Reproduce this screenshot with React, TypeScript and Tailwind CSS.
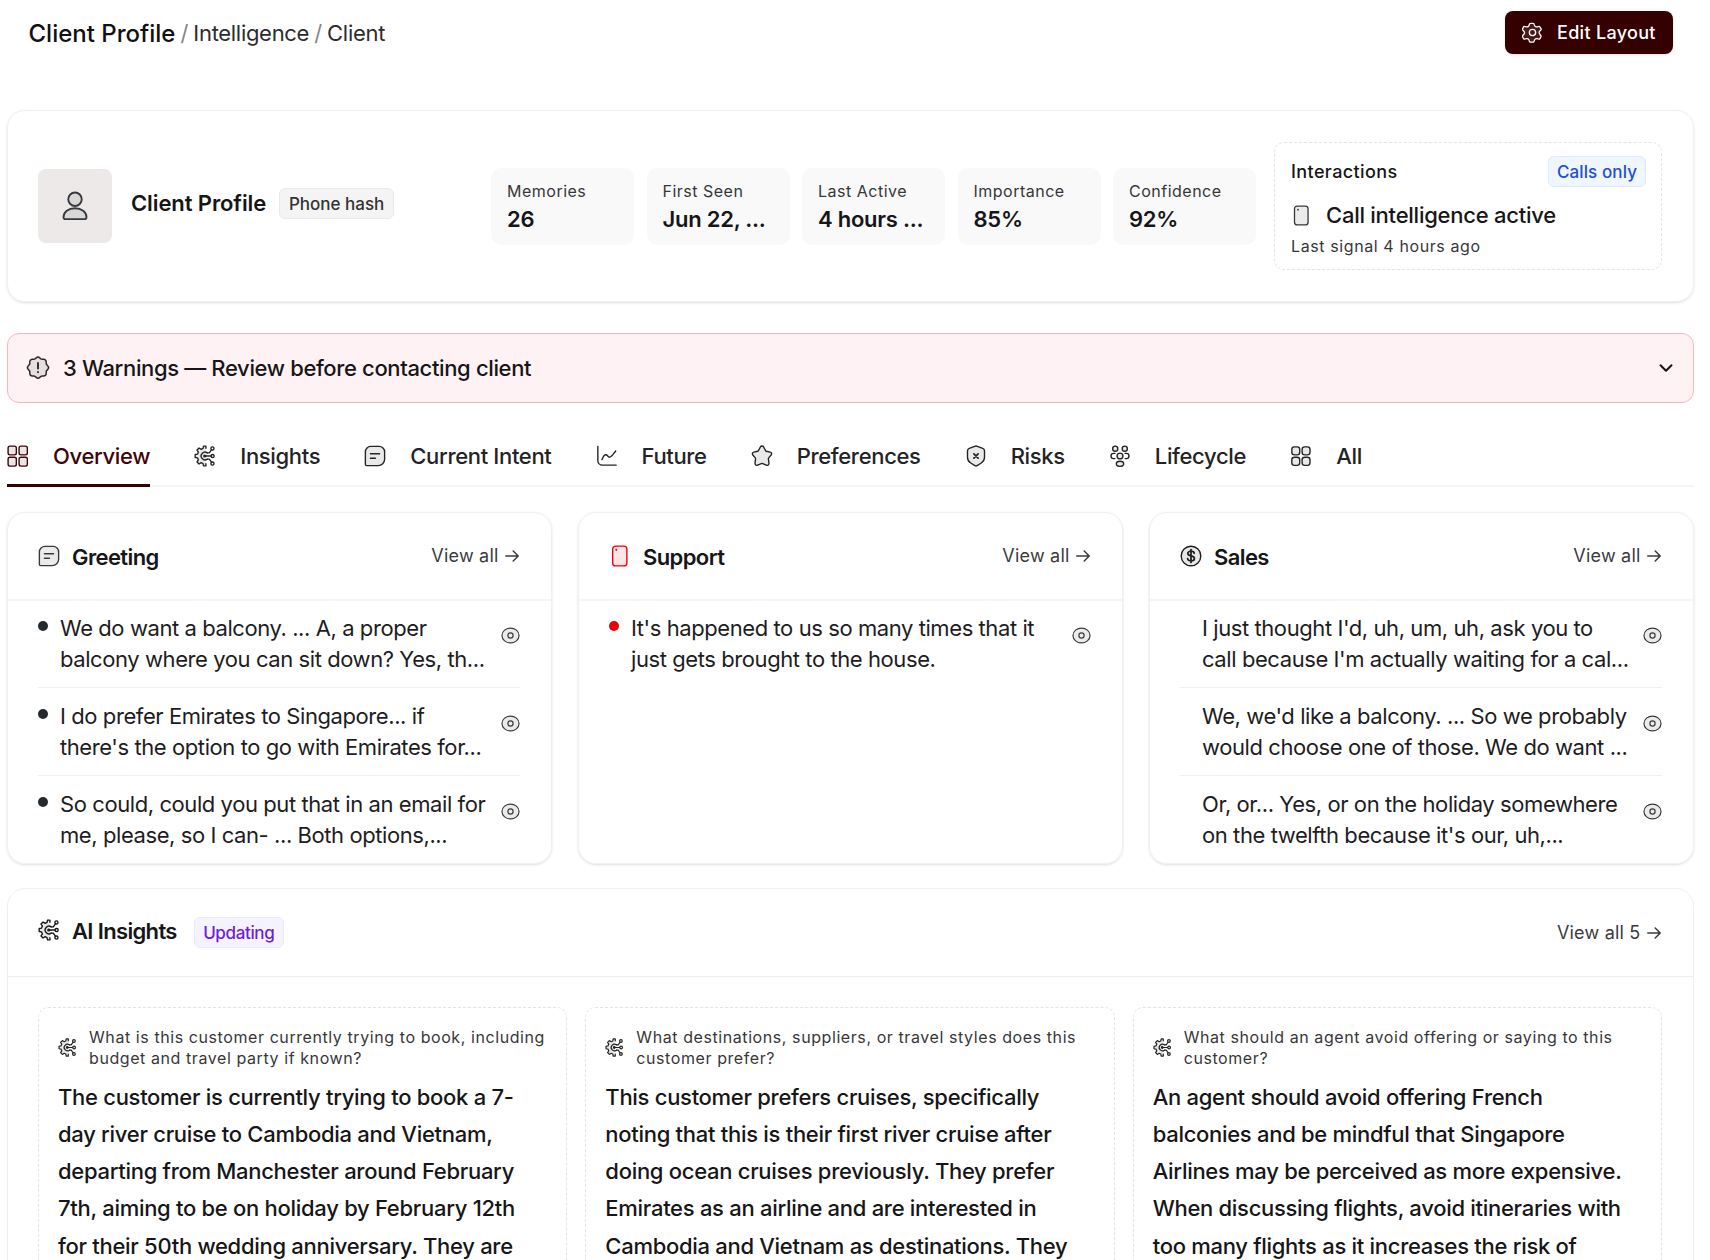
import type { ReactNode } from "react";
import { ChevronDown } from "lucide-react";

type IconProps = { className?: string };

function Svg({ className, children }: { className?: string; children: ReactNode }) {
  return (
    <svg
      viewBox="0 0 24 24"
      fill="none"
      stroke="currentColor"
      strokeWidth={1.5}
      strokeLinecap="round"
      strokeLinejoin="round"
      className={className}
    >
      {children}
    </svg>
  );
}

const tint = { fill: "currentColor", fillOpacity: 0.1 };

const GridIcon = ({ className }: IconProps) => (
  <Svg className={className}>
    <rect x="1.2" y="1.2" width="9" height="9.6" rx="2" {...tint} />
    <rect x="13.2" y="1.2" width="9" height="9.6" rx="2" {...tint} />
    <rect x="1.2" y="13.4" width="9" height="9.6" rx="2" {...tint} />
    <rect x="13.2" y="13.4" width="9" height="9.6" rx="2" {...tint} />
  </Svg>
);

const AllIcon = ({ className }: IconProps) => (
  <Svg className={className}>
    <rect x="2" y="2" width="8.6" height="8.8" rx="2.8" {...tint} />
    <rect x="13.2" y="2" width="8.6" height="8.8" rx="2.8" {...tint} />
    <rect x="2" y="13.4" width="8.6" height="8.8" rx="2.8" {...tint} />
    <rect x="13.2" y="13.4" width="8.6" height="8.8" rx="2.8" {...tint} />
  </Svg>
);

const BrainIcon = ({ className }: IconProps) => (
  <Svg className={className}>
    <path
      d="M13 3.6V1.2h-2.6l-.6 2.6-2 .9L5.5 3.3 3.3 5.500l1.500 2.200-.9 2.200-2.600.5v3.200l2.600.5.9 2.200-1.500 2.200 2.200 2.200 2.300-1.400 2 .9.6 2.600H13v-2.400"
      {...tint}
    />
    <path d="M14.500 8.600a4.200 4.200 0 1 0 0 6.800" />
    <path d="M12 12h6.500M14.500 8.600h2.200l2.300-3.200M14.500 15.400h2.200l2.300 3.200" />
    <circle cx="11.700" cy="12" r="1" />
    <circle cx="20.300" cy="12" r="1.700" />
    <circle cx="20.100" cy="3.800" r="1.700" />
    <circle cx="20.100" cy="20.200" r="1.700" />
  </Svg>
);

const NoteIcon = ({ className }: IconProps) => (
  <Svg className={className}>
    <path d="M1.500 7.500a6 6 0 0 1 6-6h9a6 6 0 0 1 6 6v8a7 7 0 0 1-7 7H3a1.500 1.500 0 0 1-1.500-1.500z" {...tint} />
    <path d="M7 9.500h10M7 14.500h5.500" />
  </Svg>
);

const ChartIcon = ({ className }: IconProps) => (
  <Svg className={className}>
    <path d="M2 1.500v15.500a5 5 0 0 0 5 5h15" />
    <path d="M6.500 16c1.200-3 2.500-5.300 4.200-5.300 2 0 2.200 2.600 4 2.600 2.300 0 4.300-3.800 6.800-6.800" />
  </Svg>
);

const StarIcon = ({ className }: IconProps) => (
  <Svg className={className}>
    <path
      d="M10.200 2.200c.8-1.400 2.800-1.400 3.600 0l2.100 3.900c.2.400.6.600 1 .700l4 .9c1.500.3 2.100 2 1.100 3.200l-2.700 3.200c-.3.300-.4.700-.3 1.100l.6 4.700c.2 1.600-1.400 2.800-2.900 2.100l-3.900-1.800a1.900 1.900 0 0 0-1.600 0L7.300 22c-1.500.700-3.100-.5-2.900-2.100l.6-4.700c0-.4-.1-.8-.3-1.100L2 10.900C1 9.700 1.600 8 3.100 7.700l4-.9c.4-.1.800-.3 1-.7z"
      {...tint}
    />
  </Svg>
);

const ShieldIcon = ({ className }: IconProps) => (
  <Svg className={className}>
    <path
      d="M10.600 1.400a4 4 0 0 1 2.800 0l6 2.300a3 3 0 0 1 1.900 2.800v6.800c0 2.600-1.400 4.900-3.600 6.300l-4 2.600a3 3 0 0 1-3.400 0l-4-2.600a7.500 7.500 0 0 1-3.600-6.300V6.500a3 3 0 0 1 1.900-2.800z"
      {...tint}
    />
    <path d="m9.700 9.700 4.600 4.600M14.300 9.700l-4.600 4.600" strokeWidth={1.900} />
  </Svg>
);

const LifecycleIcon = ({ className }: IconProps) => (
  <Svg className={className}>
    <circle cx="6.800" cy="4" r="2.800" {...tint} />
    <circle cx="17.200" cy="4" r="2.800" {...tint} />
    <circle cx="12" cy="12" r="3.200" {...tint} />
    <ellipse cx="12" cy="20.500" rx="4" ry="2.800" {...tint} />
    <path d="M6.500 9.200H5a2.800 2.800 0 0 0 0 5.600h1.500M17.500 9.200H19a2.800 2.800 0 0 1 0 5.600h-1.500" />
  </Svg>
);

const PhoneIcon = ({ className }: IconProps) => (
  <Svg className={className}>
    <rect x="4" y="1.200" width="15.500" height="21.600" rx="3.200" {...tint} />
    <path d="M8 5.200v.2" strokeWidth={2} />
  </Svg>
);

const DollarIcon = ({ className }: IconProps) => (
  <Svg className={className}>
    <circle cx="12" cy="12" r="10.700" {...tint} />
    <path
      d="M15.500 9c-.3-1.400-1.700-2.200-3.500-2.200-2 0-3.500 1-3.500 2.500 0 3.700 7.200 1.500 7.200 5.300 0 1.600-1.600 2.600-3.700 2.600-2 0-3.400-.9-3.700-2.400M12 5v14"
      strokeWidth={1.900}
    />
  </Svg>
);

const WarnIcon = ({ className }: IconProps) => (
  <Svg className={className}>
    <path
      d="M10.200 1.900a2.600 2.600 0 0 1 3.600 0l.9.800c.4.400 1 .6 1.600.6h1.300a2.600 2.600 0 0 1 2.600 2.600v1.300c0 .6.2 1.200.6 1.600l.9 1a2.600 2.600 0 0 1 0 3.600l-.9 1c-.4.400-.6 1-.6 1.600v1.300a2.600 2.600 0 0 1-2.600 2.600h-1.300c-.6 0-1.200.2-1.600.6l-.9.900a2.600 2.600 0 0 1-3.600 0l-.9-.9c-.4-.4-1-.6-1.600-.6H6.400a2.600 2.600 0 0 1-2.600-2.600V16c0-.6-.2-1.200-.6-1.600l-.9-1a2.600 2.600 0 0 1 0-3.600l.9-1c.4-.4.6-1 .6-1.600V5.900a2.600 2.600 0 0 1 2.600-2.600h1.300c.6 0 1.200-.2 1.600-.6z"
      {...tint}
    />
    <path d="M12 7v5.500M12 16v.2" strokeWidth={1.900} />
  </Svg>
);

const GearIcon = ({ className }: IconProps) => (
  <Svg className={className}>
    <path
      d="M21.300 7.100l-.5-.9c-.4-.6-.6-1-.9-1.100-.3-.2-.7-.1-1.500.1l-1.300.4c-.5.100-1 0-1.500-.2l-.3-.2a2.300 2.300 0 0 1-.9-1.100l-.4-1.100c-.2-.7-.4-1.100-.7-1.300-.3-.2-.7-.2-1.500-.2h-1.300c-.8 0-1.200 0-1.500.2-.3.200-.4.600-.7 1.300l-.3 1.100c-.2.500-.5.900-.9 1.100l-.4.200c-.5.200-1 .3-1.500.2l-1.300-.4c-.8-.2-1.200-.3-1.500-.1-.3.100-.5.500-.9 1.100l-.5.900c-.4.700-.6 1-.5 1.400 0 .3.300.6.800 1.200l1.100 1.200c.3.300.5.900.5 1.400s-.2 1.100-.5 1.400l-1.100 1.200c-.5.600-.8.900-.8 1.200-.1.400.1.700.5 1.400l.5.900c.4.600.6 1 .9 1.100.3.200.7.100 1.500-.1l1.300-.4c.5-.1 1 0 1.500.2l.4.200c.4.200.7.600.9 1.100l.3 1.100c.3.700.4 1.100.7 1.300.3.200.7.200 1.500.2h1.300c.8 0 1.200 0 1.500-.2.3-.2.500-.6.700-1.300l.4-1.100c.2-.5.500-.9.900-1.100l.3-.2c.5-.2 1-.3 1.500-.2l1.300.4c.8.2 1.200.3 1.500.1.300-.1.500-.5.900-1.100l.5-.9c.4-.7.6-1 .5-1.400 0-.3-.3-.6-.8-1.200L20.100 13.400c-.3-.3-.5-.9-.5-1.400s.2-1.100.5-1.400l1.100-1.200c.5-.6.800-.9.800-1.200.1-.4-.3-.4-.7-1.100z"
      {...tint}
    />
    <circle cx="12" cy="12" r="3.600" />
  </Svg>
);

const EyeIcon = ({ className }: IconProps) => (
  <Svg className={className}>
    <path d="M1.200 12C1.200 6.500 6.500 2.600 12 2.600s10.800 3.900 10.800 9.400-5.300 9.400-10.800 9.400S1.200 17.500 1.200 12z" {...tint} />
    <circle cx="12" cy="12" r="3.300" />
  </Svg>
);

const UserIcon = ({ className }: IconProps) => (
  <Svg className={className}>
    <circle cx="12" cy="6.600" r="5.400" {...tint} />
    <path d="M12 13.800c-5.200 0-9.200 3-9.200 7.200 0 1 .6 1.500 1.500 1.500h15.400c.9 0 1.500-.5 1.500-1.500 0-4.200-4-7.200-9.200-7.200z" {...tint} />
  </Svg>
);

function ViewAll({ label = "View all" }: { label?: string }) {
  return (
    <a className="flex items-center gap-[6.500px] text-[18px] leading-6 tracking-[0.2px] text-[#3b3b3f]">
      {label}
      <svg viewBox="0 0 14 12" fill="none" stroke="currentColor" strokeWidth={1.5} className="h-3 w-3.5" strokeLinecap="round" strokeLinejoin="round">
        <path d="M.8 6h12.400M8.200 1l5 5-5 5" />
      </svg>
    </a>
  );
}

const stats = [
  { label: "Memories", value: "26" },
  { label: "First Seen", value: "Jun 22, ..." },
  { label: "Last Active", value: "4 hours ..." },
  { label: "Importance", value: "85%" },
  { label: "Confidence", value: "92%" },
];

const tabs = [
  { label: "Overview", Icon: GridIcon },
  { label: "Insights", Icon: BrainIcon },
  { label: "Current Intent", Icon: NoteIcon },
  { label: "Future", Icon: ChartIcon },
  { label: "Preferences", Icon: StarIcon },
  { label: "Risks", Icon: ShieldIcon },
  { label: "Lifecycle", Icon: LifecycleIcon },
  { label: "All", Icon: AllIcon },
];

const panels = [
  {
    title: "Greeting",
    Icon: NoteIcon,
    iconClass: "text-[#3a3a3e]",
    dot: "bg-[#25282d]",
    items: [
      ["We do want a balcony. ... A, a proper", "balcony where you can sit down? Yes, th..."],
      ["I do prefer Emirates to Singapore... if", "there's the option to go with Emirates for..."],
      ["So could, could you put that in an email for", "me, please, so I can- ... Both options,..."],
    ],
  },
  {
    title: "Support",
    Icon: PhoneIcon,
    iconClass: "text-[#e7000b]",
    dot: "bg-[#e7000b]",
    items: [["It's happened to us so many times that it", "just gets brought to the house."]],
  },
  {
    title: "Sales",
    Icon: DollarIcon,
    iconClass: "text-[#1f1f22]",
    dot: "bg-transparent",
    items: [
      ["I just thought I'd, uh, um, uh, ask you to", "call because I'm actually waiting for a cal..."],
      ["We, we'd like a balcony. ... So we probably", "would choose one of those. We do want ..."],
      ["Or, or... Yes, or on the holiday somewhere", "on the twelfth because it's our, uh,..."],
    ],
  },
];

const insights = [
  {
    question: ["What is this customer currently trying to book, including", "budget and travel party if known?"],
    answer: [
      "The customer is currently trying to book a 7-",
      "day river cruise to Cambodia and Vietnam,",
      "departing from Manchester around February",
      "7th, aiming to be on holiday by February 12th",
      "for their 50th wedding anniversary. They are",
    ],
  },
  {
    question: ["What destinations, suppliers, or travel styles does this", "customer prefer?"],
    answer: [
      "This customer prefers cruises, specifically",
      "noting that this is their first river cruise after",
      "doing ocean cruises previously. They prefer",
      "Emirates as an airline and are interested in",
      "Cambodia and Vietnam as destinations. They",
    ],
  },
  {
    question: ["What should an agent avoid offering or saying to this", "customer?"],
    answer: [
      "An agent should avoid offering French",
      "balconies and be mindful that Singapore",
      "Airlines may be perceived as more expensive.",
      "When discussing flights, avoid itineraries with",
      "too many flights as it increases the risk of",
    ],
  },
];

export default function App() {
  return (
    <div className="h-[1260px] w-[1710px] overflow-hidden bg-white pl-[7px] pr-4 font-['Inter',sans-serif] text-[#161618]">
      <header className="flex h-[65px] items-center justify-between pl-[21.500px] pr-[21px]">
        <nav className="flex items-center gap-[5px] pt-0.5 text-[22px] text-[#2c2c2e]">
          <span className="text-2xl font-medium text-[#111]">Client Profile</span>
          <span className="text-[#85858a]">/</span>
          <span className="tracking-[-0.3px]">Intelligence</span>
          <span className="text-[#85858a]">/</span>
          <span className="tracking-[-0.3px]">Client</span>
        </nav>
        <button className="flex h-[43px] w-[168px] items-center gap-[14px] rounded-lg bg-[#350000] pl-[17px] text-[18px] font-medium tracking-[0.300px] text-white shadow-sm">
          <GearIcon className="size-[21px]" />
          Edit Layout
        </button>
      </header>

      <section className="mt-[45px] flex h-[192px] items-center rounded-[18px] border border-[#f0f0f0] pl-[30px] pr-[31px] shadow-sm">
        <div className="flex size-[74px] items-center justify-center rounded-lg bg-[#ede9e8] text-[#36393f]">
          <UserIcon className="size-[30px]" />
        </div>
        <h1 className="mb-[5px] ml-[19px] text-[22px] font-semibold tracking-[-0.100px]">Client Profile</h1>
        <span className="mb-[5px] ml-[13px] flex h-[31px] w-[115px] items-center justify-center rounded-md border border-[#e9e9e9] bg-[#f4f4f4] pt-0.5 text-[17px] font-medium text-[#333]">
          Phone hash
        </span>

        <div className="ml-auto flex gap-[12.500px]">
          {stats.map((s) => (
            <div key={s.label} className="h-[77px] w-[143px] rounded-[10px] bg-[#f9f9f9] px-4 pt-[11px]">
              <div className="text-[16px] leading-6 tracking-[0.500px] text-[#37373a]">{s.label}</div>
              <div className="mt-0.5 whitespace-nowrap text-[22px] leading-7 font-semibold tracking-[-0.250px]">{s.value}</div>
            </div>
          ))}
        </div>

        <div className="ml-[18px] h-[128px] w-[388px] rounded-[10px] border border-dashed border-[#e4e4e4] pl-4 pr-[15px] pt-[13px]">
          <div className="flex items-center justify-between">
            <span className="text-[18px] font-medium tracking-[0.400px]">Interactions</span>
            <span className="flex h-[31px] w-[98px] items-center justify-center rounded-md border border-[#dbeafe] bg-[#eff6ff] pt-0.5 text-[17px] font-medium tracking-[0.100px] text-[#1d4ed8]">
              Calls only
            </span>
          </div>
          <div className="mt-3 flex items-center gap-[14px]">
            <PhoneIcon className="size-[21px] text-[#3a3a3e]" />
            <span className="text-[22px] leading-8 font-medium tracking-[-0.250px]">Call intelligence active</span>
          </div>
          <div className="mt-[3px] text-[16px] leading-6 tracking-[0.600px] text-[#37373a]">Last signal 4 hours ago</div>
        </div>
      </section>

      <section className="mt-[31px] flex h-[70px] items-center rounded-xl border border-[#fbb4b9] bg-[#fef2f4] pl-[18px] pr-4">
        <WarnIcon className="size-6 text-[#2a2a2c]" />
        <span className="ml-[13px] mt-px text-[22px] font-medium tracking-[-0.360px]">3 Warnings — Review before contacting client</span>
        <ChevronDown className="ml-auto size-[22px]" strokeWidth={2.200} />
      </section>

      <nav className="mt-[22px] flex h-[62px] gap-[44px] border-b-2 border-[#f5f5f5]">
        {tabs.map(({ label, Icon }, i) => (
          <div
            key={label}
            className={
              i === 0
                ? "-mb-0.5 flex items-center gap-6 border-b-[3px] border-[#350000] pt-[3px] text-[#3d0508]"
                : "-mb-0.5 flex items-center gap-6 border-b-[3px] border-transparent pt-[3px] text-[#232326]"
            }
          >
            <Icon className="size-[22px]" />
            <span className="mt-px text-[22px] font-medium tracking-[-0.330px]">{label}</span>
          </div>
        ))}
      </nav>

      <div className="mt-[25px] grid grid-cols-3 gap-[26px]">
        {panels.map(({ title, Icon, iconClass, dot, items }) => (
          <section key={title} className="h-[352px] rounded-[18px] border border-[#f0f0f0] shadow-sm">
            <div className="flex h-[88px] items-center border-b-2 border-[#f5f5f5] pl-[30px] pr-8">
              <Icon className={`mb-px size-[22px] ${iconClass}`} />
              <h2 className="ml-3 mt-[3px] text-[22px] font-semibold tracking-[-0.600px]">{title}</h2>
              <div className="mb-px ml-auto">
                <ViewAll />
              </div>
            </div>
            <ul className="-mt-px ml-[30px] mr-[31px]">
              {items.map((lines, i) => (
                <li
                  key={i}
                  className={
                    i < items.length - 1
                      ? "flex h-[88px] border-b border-[#efefef] pt-[13px]"
                      : "flex h-[88px] pt-[13px]"
                  }
                >
                  <span className={`mt-2 size-2.5 shrink-0 rounded-full ${dot}`} />
                  <p className="ml-3 min-w-0 flex-1 whitespace-nowrap text-[22px] leading-[31px] tracking-[-0.420px] text-[#1d1d1f]">
                    {lines[0]}
                    <br />
                    {lines[1]}
                  </p>
                  <EyeIcon className="mt-[13px] size-[19px] shrink-0 text-[#3a3a3e]" />
                </li>
              ))}
            </ul>
          </section>
        ))}
      </div>

      <section className="mt-6 rounded-t-[18px] border border-[#f0f0f0]">
        <div className="flex h-[88px] items-center border-b border-[#ededed] pl-[30px] pr-8">
          <BrainIcon className="mb-1.5 size-[22px]" />
          <h2 className="mb-0.5 ml-3 text-[22px] font-semibold tracking-[-0.650px]">AI Insights</h2>
          <span className="ml-[17px] flex h-[31px] w-[90px] items-center justify-center rounded-md border border-[#ede9fe] bg-[#f5f3ff] pt-0.5 text-[17px] font-medium tracking-[-0.350px] text-[#6d1ce0]">
            Updating
          </span>
          <div className="ml-auto">
            <ViewAll label="View all 5" />
          </div>
        </div>
        <div className="grid grid-cols-3 gap-[18px] pl-[30px] pr-[31px] pt-[30px]">
          {insights.map((card) => (
            <article key={card.question[0]} className="h-[400px] rounded-[10px] border border-dashed border-[#e4e4e4] px-[19px] pt-[19px]">
              <div className="flex items-center gap-3">
                <BrainIcon className="mb-0.5 size-[19px] shrink-0 text-[#232326]" />
                <p className="whitespace-nowrap text-[16px] leading-[21px] tracking-[0.580px] text-[#37373a]">
                  {card.question[0]}
                  <br />
                  {card.question[1]}
                </p>
              </div>
              <p className="mt-[9.500px] text-[22px] leading-[37.300px] font-medium tracking-[-0.290px]">
                {card.answer.map((line) => (
                  <span key={line} className="block whitespace-nowrap">
                    {line}
                  </span>
                ))}
              </p>
            </article>
          ))}
        </div>
      </section>
    </div>
  );
}
